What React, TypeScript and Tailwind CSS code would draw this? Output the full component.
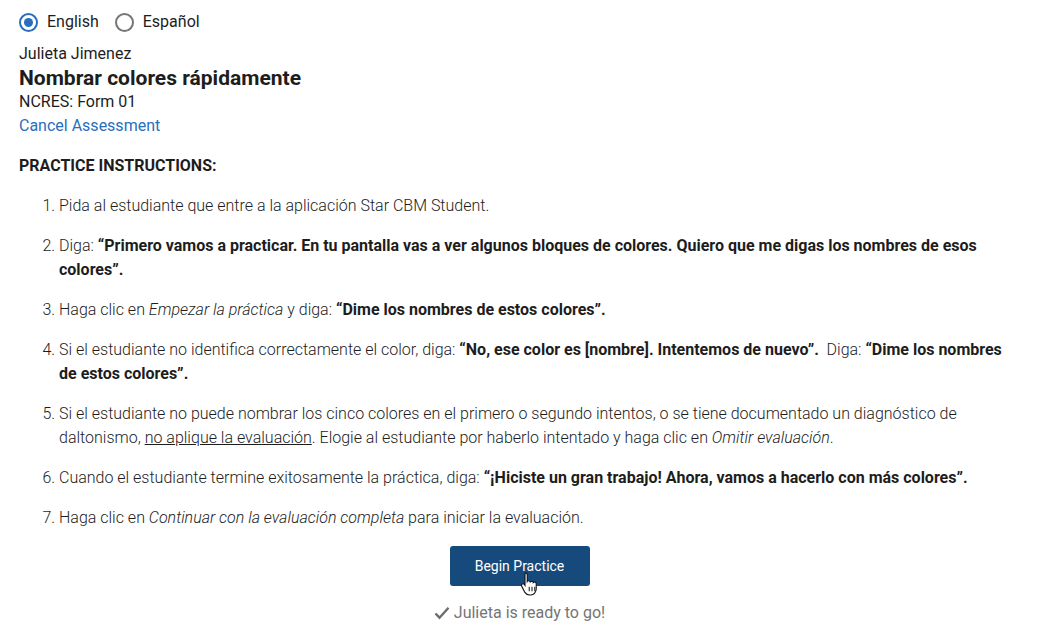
export default function App() {
	return (
		<div className="bg-white min-h-screen px-[19px] pt-[11px] text-[#1d1d1d]" style={{ fontFamily: 'Roboto, "Liberation Sans", sans-serif' }}>
			{/* language toggle */}
			<div className="flex items-center h-[22px] text-[16px]">
				<label className="flex items-center">
					<span className="w-[19px] h-[19px] rounded-full border-2 border-[#2a6ebb] flex items-center justify-center">
						<span className="w-[9px] h-[9px] rounded-full bg-[#2a6ebb]" />
					</span>
					<span className="ml-[9px]">English</span>
				</label>
				<label className="flex items-center ml-[16px]">
					<span className="w-[19px] h-[19px] rounded-full border-2 border-[#767676]" />
					<span className="ml-[9px]">Español</span>
				</label>
			</div>

			<div className="mt-[9px] text-[16px] leading-[24px]">Julieta Jimenez</div>
			<h1 className="text-[21px] font-bold leading-[24px]">Nombrar colores rápidamente</h1>
			<div className="text-[16px] leading-[24px]">NCRES: Form 01</div>
			<a className="block text-[16px] leading-[24px] text-[#2a6ebb]">Cancel Assessment</a>

			<div className="mt-[16px] text-[16px] font-bold leading-[24px]">PRACTICE INSTRUCTIONS:</div>

			<ol className="mt-[16px] pl-[40px] list-decimal text-[16px] leading-[24px] font-light space-y-[16px]">
				<li>Pida al estudiante que entre a la aplicación Star CBM Student.</li>
				<li>
					Diga: <b className="font-bold">“Primero vamos a practicar. En tu pantalla vas a ver algunos bloques de colores. Quiero que me digas los nombres de esos colores”.</b>
				</li>
				<li>
					Haga clic en <i>Empezar la práctica</i> y diga: <b className="font-bold">“Dime los nombres de estos colores”.</b>
				</li>
				<li>
					Si el estudiante no identifica correctamente el color, diga: <b className="font-bold">“No, ese color es [nombre]. Intentemos de nuevo”.</b>&nbsp; Diga: <b className="font-bold">“Dime los nombres de estos colores”.</b>
				</li>
				<li>
					Si el estudiante no puede nombrar los cinco colores en el primero o segundo intentos, o se tiene documentado un diagnóstico de daltonismo, <span className="underline">no aplique la evaluación</span>. Elogie al estudiante por haberlo intentado y haga clic en <i>Omitir evaluación</i>.
				</li>
				<li>
					Cuando el estudiante termine exitosamente la práctica, diga: <b className="font-bold">“¡Hiciste un gran trabajo! Ahora, vamos a hacerlo con más colores”.</b>
				</li>
				<li>
					Haga clic en <i>Continuar con la evaluación completa</i> para iniciar la evaluación.
				</li>
			</ol>

			<div className="flex flex-col items-center mt-[16px]">
				<div className="relative">
					<button className="w-[140px] h-[40px] rounded-[3px] bg-[#174a7c] text-white text-[14px]">Begin Practice</button>
					{/* mouse pointer */}
					<svg className="absolute left-[70px] top-[25px]" width="20" height="25" viewBox="0 0 18 22">
						<path d="M5 1.5c.9 0 1.5.6 1.5 1.5v6.2c.3-.5.8-.7 1.3-.7.8 0 1.3.5 1.4 1.1.3-.4.8-.6 1.3-.6.8 0 1.3.5 1.4 1.2.3-.3.7-.5 1.2-.5.9 0 1.5.7 1.5 1.6v4.5c0 3-2 5.5-5 5.5H8.5c-1.8 0-3.2-.9-4.1-2.3L1.6 13.6c-.5-.8-.3-1.7.4-2.1.7-.4 1.5-.2 1.9.4l.6.9V3c0-.9.6-1.5 1.5-1.5z" fill="#fff" stroke="#111" strokeWidth="1" />
						<path d="M8.3 14v4M10.8 14v4M13.3 14v4" stroke="#111" strokeWidth="0.9" />
					</svg>
				</div>
				<div className="mt-[16px] flex items-center text-[16px] text-[#757575] leading-[22px]">
					<svg width="16" height="14" viewBox="0 0 16 14" className="mr-[4px]">
						<path d="M1.5 7.5l4 4.2L14.5 1.8" fill="none" stroke="#6e6e6e" strokeWidth="2.4" />
					</svg>
					Julieta is ready to go!
				</div>
			</div>
		</div>
	);
}
